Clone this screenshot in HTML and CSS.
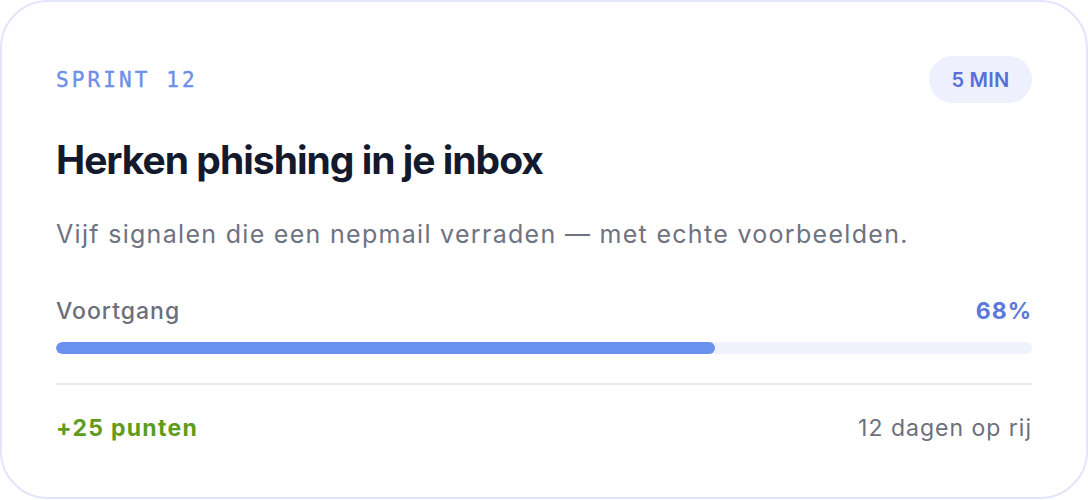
FILE: index.html
```html
<!DOCTYPE html>
<html lang="nl">
<head>
<meta charset="utf-8">
<link rel="stylesheet" href="styles.css">
</head>
<body>
<div class="card">
  <div class="head">
    <span class="eyebrow">SPRINT 12</span>
    <span class="badge">5 MIN</span>
  </div>
  <h1 class="title">Herken phishing in je inbox</h1>
  <p class="desc">Vijf signalen die een nepmail verraden — met echte voorbeelden.</p>
  <div class="progress-head">
    <span class="label">Voortgang</span>
    <span class="pct">68%</span>
  </div>
  <div class="track"><div class="fill" style="width:67.5%"></div></div>
  <div class="divider"></div>
  <div class="foot">
    <span class="points">+25 punten</span>
    <span class="streak">12 dagen op rij</span>
  </div>
</div>
</body>
</html>
```
FILE: styles.css
```css
* { box-sizing: border-box; }
html, body { margin: 0; padding: 0; background: #ffffff; }
body { font-family: Inter, "Noto Sans", sans-serif; }
.card {
  width: 1088px;
  height: 499px;
  border: 2px solid #e2e5fb;
  border-radius: 48px;
  padding: 54px 54px 0 54px;
  background: #ffffff;
}
.head {
  display: flex;
  justify-content: space-between;
  align-items: center;
  height: 47px;
}
.eyebrow {
  font-family: "DejaVu Sans Mono", "Liberation Mono", monospace;
  font-size: 21px;
  letter-spacing: 3.1px;
  color: #6e8fe8;
  -webkit-text-stroke: 0.4px #6e8fe8;
}
.badge {
  display: inline-flex;
  align-items: center;
  justify-content: center;
  width: 103px;
  height: 47px;
  border-radius: 24px;
  background: #eef1fd;
  color: #5571d8;
  font-weight: 600;
  font-size: 20px;
  letter-spacing: 0.2px;
}
.title {
  margin: 33px 0 0 0;
  font-size: 39px;
  line-height: 48px;
  font-weight: 700;
  letter-spacing: -1px;
  color: #141a2d;
}
.desc {
  margin: 34px 0 0 0;
  font-size: 25px;
  line-height: 32px;
  color: #6f7280;
  letter-spacing: 1.3px;
}
.progress-head {
  display: flex;
  justify-content: space-between;
  align-items: baseline;
  margin-top: 47px;
  font-size: 23px;
  line-height: 28px;
}
.label { color: #6c6f7c; font-weight: 500; letter-spacing: 1px; }
.pct { color: #5b78dc; font-weight: 700; letter-spacing: 1px; }
.track {
  margin-top: 17px;
  height: 12px;
  border-radius: 6px;
  background: #eff1fb;
  overflow: hidden;
}
.fill {
  height: 100%;
  border-radius: 6px;
  background: #6a90f0;
}
.divider {
  margin-top: 29px;
  height: 2px;
  background: #e8e9ee;
}
.foot {
  display: flex;
  justify-content: space-between;
  align-items: baseline;
  margin-top: 29px;
  font-size: 23px;
  line-height: 28px;
}
.points { color: #5e9c1c; font-weight: 700; letter-spacing: 1.3px; }
.streak { color: #6c6f7c; letter-spacing: 1px; }
```
